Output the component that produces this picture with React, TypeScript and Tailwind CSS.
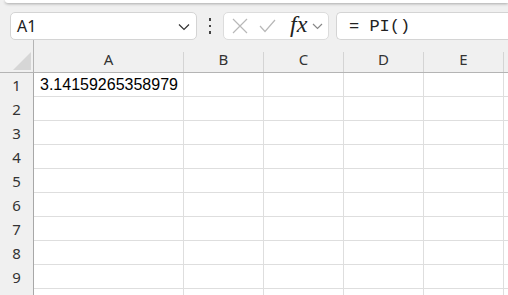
import React from "react";

const cols = [
  { label: "A", w: "w-[150px]" },
  { label: "B", w: "w-[80px]" },
  { label: "C", w: "w-[80px]" },
  { label: "D", w: "w-[80px]" },
  { label: "E", w: "w-[80px]" },
];

export default function App() {
  const rows = [1, 2, 3, 4, 5, 6, 7, 8, 9];
  return (
    <div className="w-[508px] h-[295px] overflow-hidden bg-[#f0f0f0] relative" style={{ fontFamily: '"Noto Sans", sans-serif' }}>
      {/* top ribbon edge */}
      <div className="ml-[5px] h-[3px] bg-white rounded-bl-[4px] shadow-[0_1px_3px_rgba(0,0,0,0.3)]" />
      {/* toolbar */}
      <div className="flex items-start h-[37px] pt-[9px] pl-[10px]">
        <div className="flex items-center w-[187px] h-[28px] bg-white border border-[#d4d4d4] rounded-[5px] pl-[6px] pr-[6px]">
          <span className="text-[16px] text-[#222] leading-none flex-1">A1</span>
          <svg width="12" height="8" viewBox="0 0 12 8" className="mt-[1px]">
            <path d="M1 1.5 L6 6.5 L11 1.5" fill="none" stroke="#333" strokeWidth="1.2" />
          </svg>
        </div>
        <div className="w-[26px] h-[28px] flex flex-col items-center justify-center gap-[4px]">
          <div className="w-[2.5px] h-[2.5px] bg-[#444]" />
          <div className="w-[2.5px] h-[2.5px] bg-[#444]" />
          <div className="w-[2.5px] h-[2.5px] bg-[#444]" />
        </div>
        <div className="flex items-center w-[106px] h-[28px] bg-white border border-[#dcdcdc] rounded-[5px] pl-[8px]">
          <svg width="16" height="16" viewBox="0 0 16 16">
            <path d="M1 1 L15 15 M15 1 L1 15" fill="none" stroke="#b8b8b8" strokeWidth="1.2" />
          </svg>
          <svg width="17" height="14" viewBox="0 0 17 14" className="ml-[11px]">
            <path d="M1 7 L6 12.5 L16 1" fill="none" stroke="#b8b8b8" strokeWidth="1.2" />
          </svg>
          <span
            className="ml-[14px] text-[24px] italic text-[#222] leading-none -mt-[4px]"
            style={{ fontFamily: '"Liberation Serif", serif' }}
          >
            fx
          </span>
          <svg width="11" height="7" viewBox="0 0 11 7" className="ml-[5px]">
            <path d="M1 1 L5.5 5.5 L10 1" fill="none" stroke="#888" strokeWidth="1.2" />
          </svg>
        </div>
        <div className="flex items-center flex-1 h-[28px] ml-[7px] bg-white border border-[#d4d4d4] rounded-l-[5px] border-r-0 pl-[12px]">
          <span
            className="text-[17px] text-[#222] leading-none whitespace-pre"
            style={{ fontFamily: '"Liberation Mono", monospace' }}
          >
            = PI()
          </span>
        </div>
      </div>
      {/* grid */}
      <div className="flex flex-col">
        {/* header row */}
        <div className="flex h-[33px] border-b border-[#b4b4b4]">
          <div className="w-[34px] shrink-0 border-r border-[#b4b4b4] relative">
            <svg width="20" height="19" viewBox="0 0 20 19" className="absolute right-[1px] bottom-[1px]">
              <path d="M19 0 L19 18 L1 18 Z" fill="#d6d6d6" />
            </svg>
          </div>
          {cols.map((c) => (
            <div key={c.label} className={`${c.w} shrink-0 flex flex-col justify-end`}>
              <div className="h-[20px] border-r border-[#d4d4d4] flex items-end justify-center pb-[5px]">
                <span className="text-[15px] leading-none text-[#333]">{c.label}</span>
              </div>
            </div>
          ))}
          <div className="flex-1" />
        </div>
        {rows.map((r) => (
          <div key={r} className="flex h-[24px] shrink-0 border-b border-[#dedede]">
            <div className="w-[34px] shrink-0 border-r border-[#a8a8a8] bg-[#f0f0f0] flex items-center justify-center -mb-[1px]">
              <span className="text-[15px] leading-none text-[#333] pt-[1px]">{r}</span>
            </div>
            {cols.map((c) => (
              <div key={c.label} className={`${c.w} shrink-0 bg-white border-r border-[#dedede] flex items-center overflow-visible`}>
                {r === 1 && c.label === "A" ? (
                  <span
                    className="pl-[6px] text-[16px] leading-none text-black whitespace-nowrap pt-[1px]"
                    style={{ fontFamily: '"Liberation Sans", sans-serif' }}
                  >
                    3.14159265358979
                  </span>
                ) : null}
              </div>
            ))}
            <div className="flex-1 bg-white" />
          </div>
        ))}
        <div className="flex h-[24px] shrink-0">
          <div className="w-[34px] shrink-0 border-r border-[#a8a8a8] bg-[#f0f0f0]" />
          {cols.map((c) => (
            <div key={c.label} className={`${c.w} shrink-0 bg-white border-r border-[#dedede]`} />
          ))}
          <div className="flex-1 bg-white" />
        </div>
      </div>
    </div>
  );
}
